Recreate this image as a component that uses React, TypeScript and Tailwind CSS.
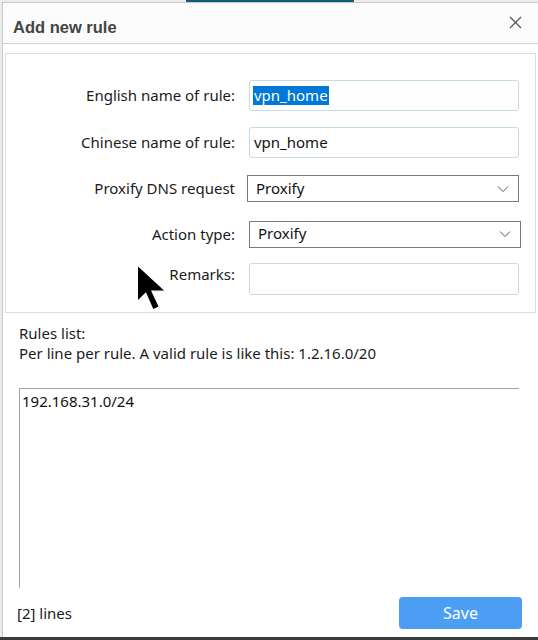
import React from 'react';

const font = { fontFamily: '"Noto Sans", "Open Sans", sans-serif' };

function Chevron() {
  return (
    <svg width="12" height="8" viewBox="0 0 12 8" className="text-[#555]">
      <path d="M1 1.5 L6 6.5 L11 1.5" fill="none" stroke="currentColor" strokeWidth="1" />
    </svg>
  );
}

function Cursor() {
  return (
    <svg width="32" height="48" viewBox="0 0 30 46" className="absolute left-[136px] top-[264px]">
      <path d="M1 1 L1 36 L9 28 L16 44 L22 41 L15 26 L28 26 Z" fill="#000" stroke="#fff" strokeWidth="1.2" />
    </svg>
  );
}

function Label({ children }: { children: React.ReactNode }) {
  return <div className="w-[229px] text-right text-[15px] text-[#1b1b1b]">{children}</div>;
}

export default function App() {
  return (
    <div className="relative w-[538px] h-[640px] overflow-hidden bg-[#ececec]" style={font}>
      {/* strip behind dialog */}
      <div className="h-[2px] flex">
        <div className="w-[186px]" />
        <div className="w-[168px] bg-[#0f5f6e]" />
      </div>

      <div className="ml-[2px] h-[635px] bg-white border-t border-l border-[#c9c9c9] flex flex-col">
        <div className="h-[41px] flex items-center justify-between pl-[10px] pr-[16px] bg-[#fbfbfb] border-b border-[#d4d4d4]">
          <span
            className="text-[16.5px] font-bold text-[#444] pt-[9px]"
            style={{ fontFamily: '"Liberation Sans", Arial, sans-serif' }}
          >
            Add new rule
          </span>
          <svg width="13" height="13" viewBox="0 0 13 13" className="mt-[-1px]">
            <path d="M1 1 L12 12 M12 1 L1 12" stroke="#555" strokeWidth="1.2" />
          </svg>
        </div>

        <div className="mt-[9px] ml-[2px] mr-[2px] border border-[#dcdcdc] pt-[26px] pb-[17px] flex flex-col">
          <div className="flex items-center h-[31px]">
            <Label>English name of rule:</Label>
            <div className="ml-[14px] w-[270px] h-[31px] border border-[#c6d9e6] rounded-[3px] flex items-center pl-[3px] text-[15px]">
              <span className="bg-[#0078d7] text-white px-[1px] leading-[19px]">vpn_home</span>
            </div>
          </div>
          <div className="flex items-center h-[31px] mt-[16px]">
            <Label>Chinese name of rule:</Label>
            <div className="ml-[14px] w-[270px] h-[31px] border border-[#c6d9e6] rounded-[3px] flex items-center pl-[4px] text-[15px] text-[#111]">
              vpn_home
            </div>
          </div>
          <div className="flex items-center h-[27px] mt-[17px]">
            <Label>Proxify DNS request</Label>
            <div className="ml-[12px] w-[272px] h-[27px] border border-[#7a7a7a] flex items-center justify-between pl-[8px] pr-[9px] text-[15px] text-[#111]">
              <span>Proxify</span>
              <Chevron />
            </div>
          </div>
          <div className="flex items-center h-[26px] mt-[19px]">
            <Label>Action type:</Label>
            <div className="ml-[14px] w-[272px] h-[27px] border border-[#7a7a7a] flex items-center justify-between pl-[8px] pr-[9px] text-[15px] text-[#111]">
              <span className="mt-[-2px]">Proxify</span>
              <Chevron />
            </div>
          </div>
          <div className="flex items-center h-[32px] mt-[16px]">
            <Label>
              <span className="relative top-[-5px]">Remarks:</span>
            </Label>
            <div className="ml-[14px] w-[270px] h-[32px] border border-[#c6d9e6] rounded-[3px]" />
          </div>
        </div>

        <div className="pl-[16px] pt-[10px] text-[15px] text-[#1b1b1b] leading-[20px]">
          <div>Rules list:</div>
          <div>Per line per rule. A valid rule is like this: 1.2.16.0/20</div>
        </div>

        <div className="ml-[16px] mt-[25px] w-[500px] h-[200px] border-t border-l border-[#a3a3a3] pl-[2px] pt-[1px] text-[15px] text-[#111]">
          192.168.31.0/24
        </div>

        <div className="flex items-center justify-between pl-[14px] pr-[16px] mt-[9px]">
          <span className="text-[15px] text-[#1b1b1b]">[2] lines</span>
          <button className="w-[123px] h-[32px] rounded-[4px] bg-[#4b9ef4] text-white text-[16px]">Save</button>
        </div>
      </div>

      <div className="absolute left-0 right-0 bottom-0 h-[3px] bg-[#3a3a3a]" />
      <Cursor />
    </div>
  );
}
